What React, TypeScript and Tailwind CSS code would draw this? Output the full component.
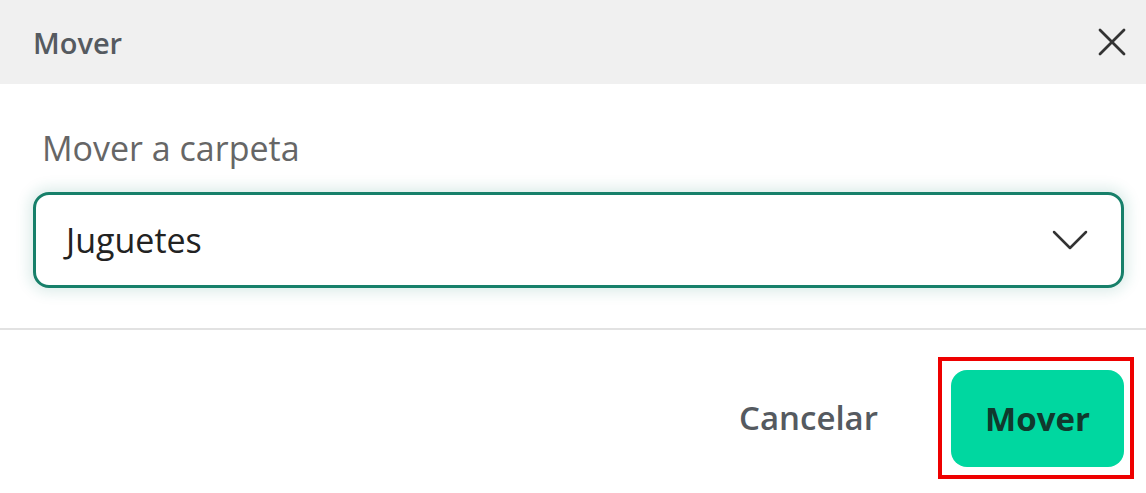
import React from 'react';
import { X } from 'lucide-react';

const App: React.FC = () => {
  return (
    <div className="w-[1146px] h-[493px] bg-white overflow-hidden font-['Open_Sans',sans-serif]">
      {/* Header */}
      <div className="h-[84px] bg-[#f0f0f0] flex items-center justify-between pl-[33px] pr-[10px]">
        <h1 className="text-[29px] font-semibold text-[#555a60] leading-none">Mover</h1>
        <X size={48} strokeWidth={1.4} className="text-[#333]" />
      </div>

      {/* Body */}
      <div className="pl-[33px] pr-[22px] pt-[44px] pb-[40px] border-b-2 border-[#e2e2e2]">
        <label className="block pl-[9px] text-[34px] leading-[40px] text-[#666]">Mover a carpeta</label>
        <div className="mt-[24px] h-[96px] rounded-[16px] border-[3px] border-[#17806a] shadow-[0_0_14px_4px_rgba(23,128,106,0.15)] flex items-center justify-between pl-[30px] pr-[33px]">
          <span className="text-[34px] text-[#222]">Juguetes</span>
          <svg width="36" height="20" viewBox="0 0 36 20" fill="none" stroke="#333" strokeWidth="2.5" strokeLinecap="round" strokeLinejoin="round">
            <polyline points="2,2 18,18 34,2" />
          </svg>
        </div>
      </div>

      {/* Footer */}
      <div className="flex items-center justify-end pr-[12px] pt-[27px] gap-[60px]">
        <button className="text-[33px] font-semibold text-[#555a60]">Cancelar</button>
        <div className="border-[4px] border-[#ee0000] pl-[9px] pr-[6px] pt-[9px] pb-[8px]">
          <button className="w-[173px] h-[97px] rounded-[16px] bg-[#00d7a0] text-[33px] font-bold text-[#10392d]">
            Mover
          </button>
        </div>
      </div>
    </div>
  );
};

export default App;
